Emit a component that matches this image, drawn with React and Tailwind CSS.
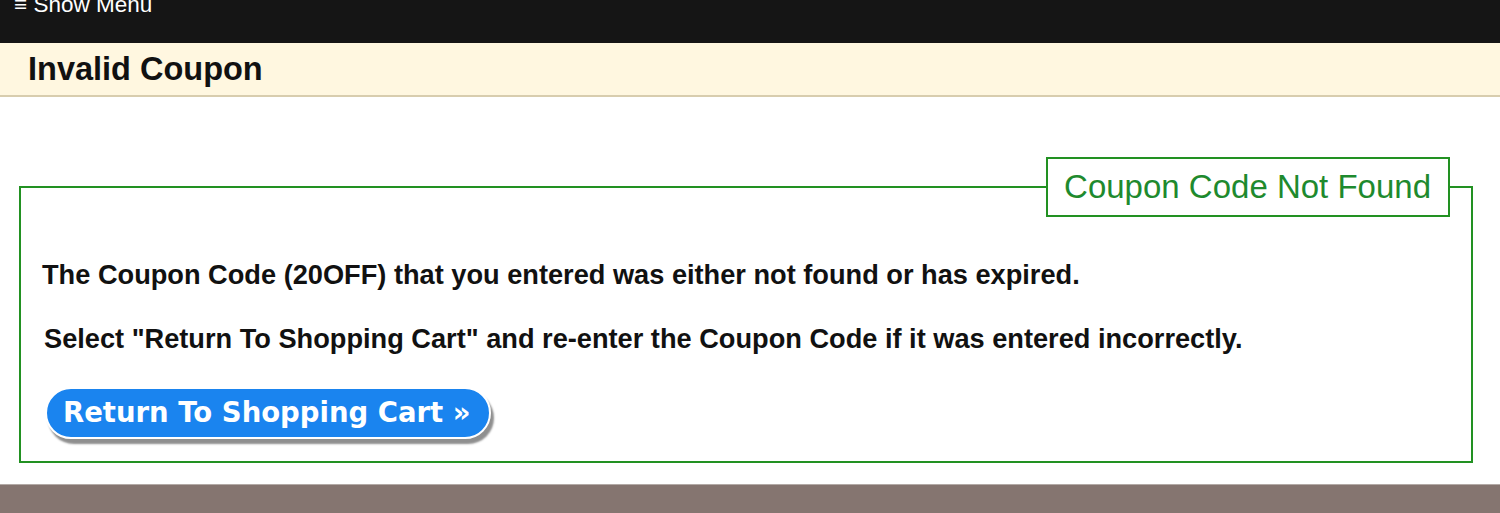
export default function App() {
  return (
    <div className="w-full h-[513px] overflow-hidden bg-white font-['Liberation_Sans',Arial,sans-serif]">
      {/* TOP BAR */}
      <div className="h-[43px] bg-[#151515] overflow-hidden">
        <div className="pl-[14px] -mt-[8px] text-[22.5px] leading-[26px] text-white">
          ≡ Show Menu
        </div>
      </div>

      {/* PAGE TITLE */}
      <div className="h-[54px] bg-[#fff7e0] border-b-2 border-[#d8cdae] pl-[28px] flex items-center">
        <h1 className="text-[32.5px] font-bold text-[#111]">Invalid Coupon</h1>
      </div>

      {/* CONTENT */}
      <div className="pl-[19px] pr-[27px] pt-[60px]">
        <fieldset className="border-2 border-[#229122] px-[21px] pb-[22px]">
          <legend className="ml-auto border-2 border-[#229122] pl-[16px] pr-[17px] h-[60px] flex items-center text-[33px] text-[#1e8a2e] bg-white">
            Coupon Code Not Found
          </legend>

          <p className="mt-[42px] text-[27.2px] leading-[32px] font-bold text-[#111]">
            The Coupon Code (20OFF) that you entered was either not found or has expired.
          </p>
          <p className="mt-[32px] text-[27.2px] leading-[32px] font-bold text-[#111] pl-[2px]">
            Select "Return To Shopping Cart" and re-enter the Coupon Code if it was entered incorrectly.
          </p>

          <button className="mt-[32px] ml-[3px] h-[52px] pl-[16px] pr-[18px] rounded-full bg-[#1a84ef] border-2 border-white shadow-[3px_5px_2px_#8f8f8f] text-white font-['DejaVu_Sans',Verdana,sans-serif] font-bold text-[27.5px] leading-none">
            Return To Shopping Cart »
          </button>
        </fieldset>
      </div>

      {/* FOOTER */}
      <div className="mt-[21px] h-[40px] bg-[#857570] border-t border-[#b3aaa6]"></div>
    </div>
  );
}
